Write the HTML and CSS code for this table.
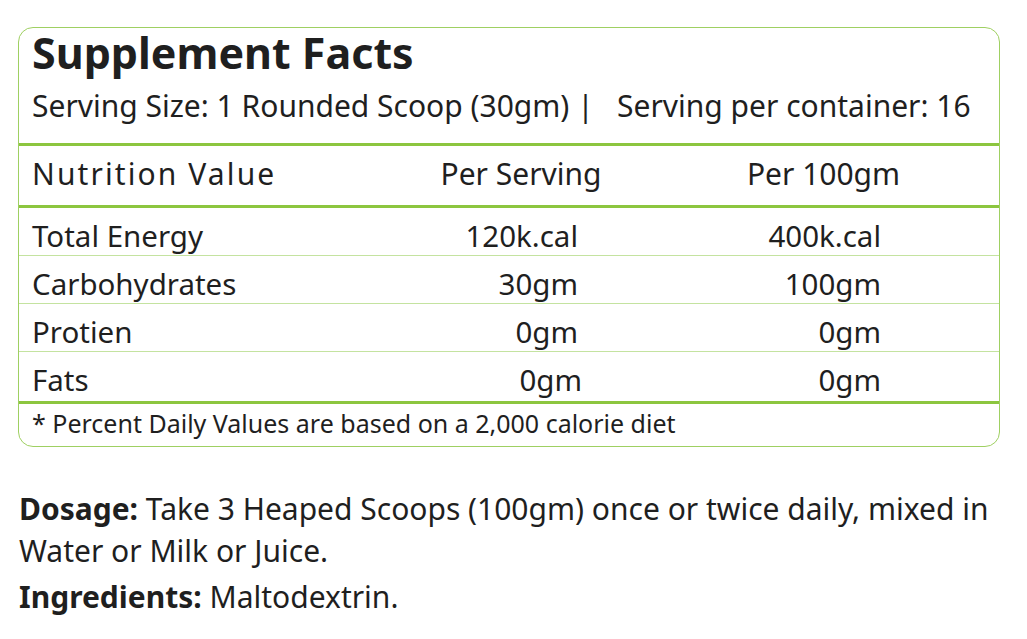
FILE: index.html
```html
<!DOCTYPE html>
<html lang="en">
<head>
<meta charset="utf-8">
<title>Supplement Facts</title>
<link rel="stylesheet" href="styles.css">
</head>
<body>
<main class="page">
  <section class="facts">
    <header class="facts-head">
      <h1 class="facts-title">Supplement Facts</h1>
      <p class="facts-serving">Serving Size: 1 Rounded Scoop (30gm) |&nbsp;&nbsp; Serving per container: 16</p>
    </header>
    <div class="row row-head">
      <span class="c1">Nutrition Value</span>
      <span class="c2">Per Serving</span>
      <span class="c3">Per 100gm</span>
    </div>
    <div class="row">
      <span class="c1">Total Energy</span>
      <span class="c2">120k.cal</span>
      <span class="c3">400k.cal</span>
    </div>
    <div class="row">
      <span class="c1">Carbohydrates</span>
      <span class="c2">30gm</span>
      <span class="c3">100gm</span>
    </div>
    <div class="row">
      <span class="c1">Protien</span>
      <span class="c2">0gm</span>
      <span class="c3">0gm</span>
    </div>
    <div class="row row-last">
      <span class="c1">Fats</span>
      <span class="c2 nudge">0gm</span>
      <span class="c3">0gm</span>
    </div>
    <p class="facts-note">* Percent Daily Values are based on a 2,000 calorie diet</p>
  </section>
  <section class="info">
    <p class="info-line"><strong class="label">Dosage:</strong> Take 3 Heaped Scoops (100gm) once or twice daily, mixed in Water or Milk or Juice.</p>
    <p class="info-line"><strong class="label">Ingredients:</strong> Maltodextrin.</p>
  </section>
</main>
</body>
</html>
```
FILE: styles.css
```css
* { box-sizing: border-box; }
html, body { margin: 0; padding: 0; background: #ffffff; }
body {
  font-family: "Noto Sans", "Open Sans", sans-serif;
  color: #1f1f1f;
}
.page {
  padding: 27px 27px 0 18px;
}
.facts {
  border: 1px solid #9fd062;
  border-radius: 15px;
}
.facts-head {
  padding: 0 13px 8px;
  border-bottom: 3px solid #8cc63f;
}
.facts-title {
  margin: 0;
  font-size: 43px;
  line-height: 49px;
  font-weight: 700;
}
.facts-serving {
  margin: 0;
  font-size: 30px;
  line-height: 58px;
  white-space: nowrap;
}
.row {
  display: grid;
  grid-template-columns: 432px 114px 303px;
  padding: 8px 13px 0;
  font-size: 29.5px;
  line-height: 39px;
  border-bottom: 1px solid #c4e3a0;
}
.row .c2, .row .c3 { text-align: right; white-space: nowrap; }
.row .c3 { padding-left: 189px; }
.row .nudge { margin-right: -4px; }
.row-head {
  grid-template-columns: 352px 274px 331px;
  padding: 0 13px 3px;
  font-size: 30px;
  line-height: 56px;
  border-bottom: 3px solid #8cc63f;
}
.row-head .c1 { letter-spacing: 2.1px; }
.row-head .c2, .row-head .c3 { text-align: center; padding-left: 0; }
.row-last {
  padding-bottom: 2px;
  border-bottom: 3px solid #8cc63f;
}
.facts-note {
  margin: 0;
  padding: 0 13px 4px;
  font-size: 25px;
  line-height: 38px;
}
.info {
  padding: 41px 0 0 1px;
}
.info-line {
  margin: 0;
  font-size: 30px;
  line-height: 42px;
}
.info-line + .info-line { margin-top: 4px; }
.label { font-weight: 700; }
```
